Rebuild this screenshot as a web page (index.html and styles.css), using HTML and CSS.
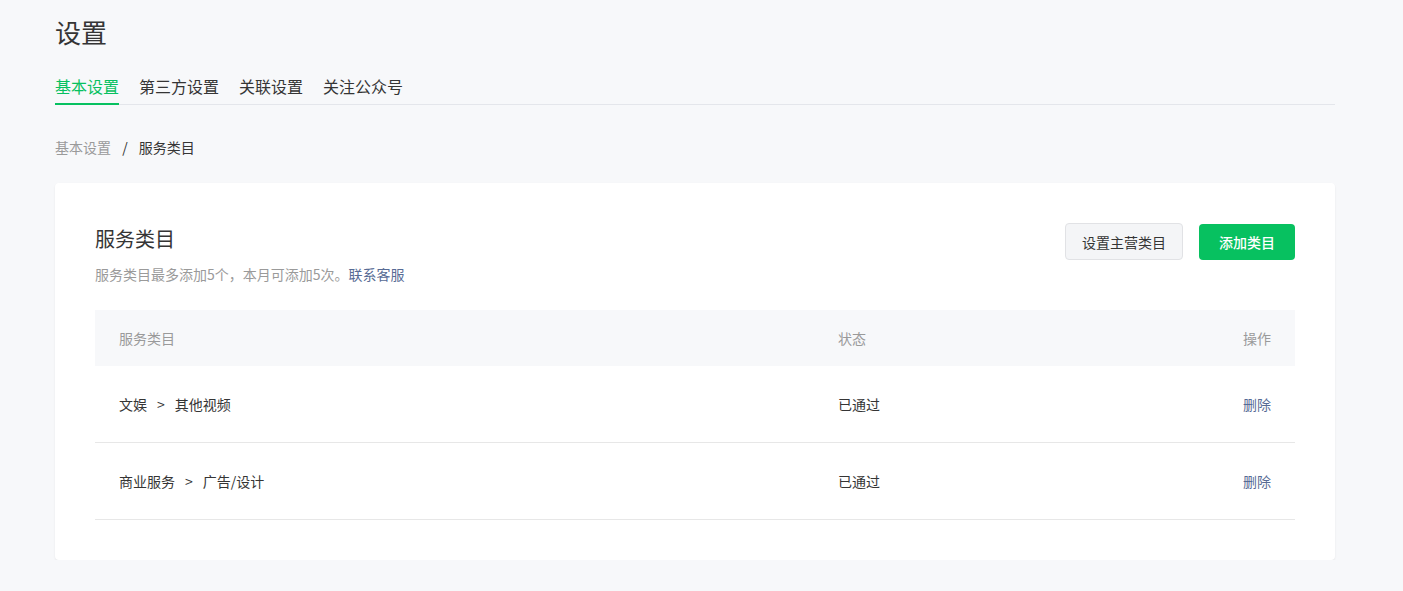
FILE: index.html
```html
<!DOCTYPE html>
<html lang="zh-CN">
<head>
    <meta charset="UTF-8">
    <meta name="viewport" content="width=device-width, initial-scale=1.0">
    <title>设置</title>
    <link rel="stylesheet" href="styles.css">
</head>
<body>
    <div class="page">
        <h1 class="page-title">设置</h1>
        <nav class="tabs">
            <a class="tab active">基本设置</a>
            <a class="tab">第三方设置</a>
            <a class="tab">关联设置</a>
            <a class="tab">关注公众号</a>
        </nav>

        <div class="breadcrumb">
            <span class="crumb-link">基本设置</span>
            <span class="crumb-sep">/</span>
            <span class="crumb-current">服务类目</span>
        </div>

        <div class="card">
            <div class="card-header">
                <div>
                    <h2 class="card-title">服务类目</h2>
                    <p class="card-desc">服务类目最多添加5个，本月可添加5次。<a class="link">联系客服</a></p>
                </div>
                <div class="actions">
                    <button class="btn btn-default">设置主营类目</button>
                    <button class="btn btn-primary">添加类目</button>
                </div>
            </div>

            <div class="table">
                <div class="table-row table-head">
                    <div>服务类目</div>
                    <div>状态</div>
                    <div class="col-op">操作</div>
                </div>
                <div class="table-row">
                    <div>文娱<span class="arrow">&gt;</span>其他视频</div>
                    <div>已通过</div>
                    <div class="col-op"><a class="link">删除</a></div>
                </div>
                <div class="table-row">
                    <div>商业服务<span class="arrow">&gt;</span>广告/设计</div>
                    <div>已通过</div>
                    <div class="col-op"><a class="link">删除</a></div>
                </div>
            </div>
        </div>
    </div>
</body>
</html>
```

FILE: styles.css
```css
* {
    margin: 0;
    padding: 0;
    box-sizing: border-box;
}

body {
    background: #f7f8fa;
    color: #353535;
    font-family: "Noto Sans CJK SC", "Liberation Sans", sans-serif;
    font-size: 14px;
}

.page {
    width: 1280px;
    margin-left: 55px;
    padding-top: 14px;
}

.page-title {
    font-size: 26px;
    line-height: 36px;
    font-weight: 400;
    color: #353535;
}

.tabs {
    display: flex;
    gap: 20px;
    margin-top: 24px;
    border-bottom: 1px solid #e4e6eb;
}

.tab {
    font-size: 16px;
    line-height: 24px;
    padding-bottom: 5px;
    color: #353535;
    border-bottom: 2px solid transparent;
    margin-bottom: -1px;
    cursor: pointer;
}

.tab.active {
    color: #07c160;
    border-bottom-color: #07c160;
}

.breadcrumb {
    margin-top: 32px;
    line-height: 20px;
    font-size: 14px;
}

.crumb-link {
    color: #9a9a9a;
}

.crumb-sep {
    margin: 0 8px;
    color: #353535;
}

.card {
    margin-top: 26px;
    background: #fff;
    border-radius: 4px;
    box-shadow: 0 1px 2px rgba(0, 0, 0, 0.08);
    padding: 40px;
}

.card-header {
    display: flex;
    justify-content: space-between;
    align-items: flex-start;
}

.card-title {
    font-size: 20px;
    line-height: 28px;
    font-weight: 400;
    color: #353535;
    margin-top: 2px;
}

.card-desc {
    margin-top: 10px;
    font-size: 14px;
    line-height: 22px;
    color: #9a9a9a;
}

.link {
    color: #576b95;
    cursor: pointer;
}

.actions {
    display: flex;
    gap: 16px;
}

.btn {
    height: 37px;
    font-family: inherit;
    font-size: 14px;
    border-radius: 4px;
    cursor: pointer;
}

.btn-default {
    width: 118px;
    background: #f4f5f7;
    border: 1px solid #e1e2e5;
    color: #353535;
}

.btn-primary {
    width: 96px;
    margin-top: 1px;
    height: 36px;
    background: #07c160;
    border: none;
    color: #fff;
    font-weight: 500;
}

.table {
    margin-top: 25px;
}

.table-row {
    display: grid;
    grid-template-columns: 719px 1fr auto;
    align-items: center;
    height: 77px;
    padding: 0 24px;
    border-bottom: 1px solid #e7e7e7;
}

.table-head {
    height: 56px;
    background: #f7f8fa;
    border-bottom: none;
    color: #9a9a9a;
}

.col-op {
    text-align: right;
}

.arrow {
    margin: 0 10px;
}
```
